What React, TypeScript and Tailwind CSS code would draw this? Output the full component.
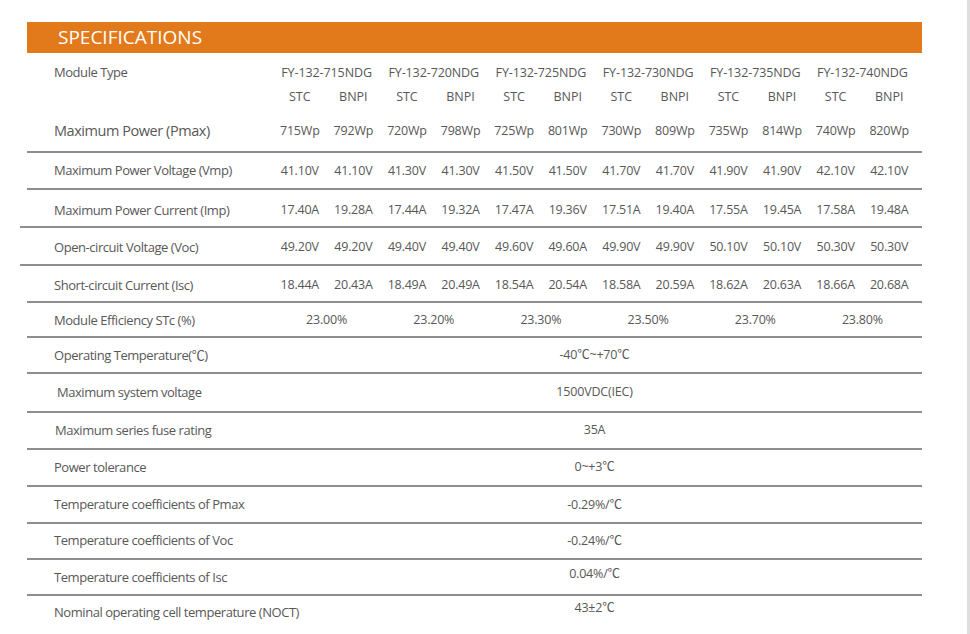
import React from "react"

const font = { fontFamily: '"Open Sans", "Noto Sans CJK SC", sans-serif' }

const models = ["715", "720", "725", "730", "735", "740"]

const pairRows = [
  {
    label: "Maximum Power Voltage (Vmp)",
    values: ["41.10V", "41.10V", "41.30V", "41.30V", "41.50V", "41.50V", "41.70V", "41.70V", "41.90V", "41.90V", "42.10V", "42.10V"],
    row: "h-[37px] pt-[1px]",
    wide: false,
  },
  {
    label: "Maximum Power Current (Imp)",
    values: ["17.40A", "19.28A", "17.44A", "19.32A", "17.47A", "19.36V", "17.51A", "19.40A", "17.55A", "19.45A", "17.58A", "19.48A"],
    row: "h-[38px] pt-[5px]",
    wide: true,
  },
  {
    label: "Open-circuit Voltage (Voc)",
    values: ["49.20V", "49.20V", "49.40V", "49.40V", "49.60V", "49.60A", "49.90V", "49.90V", "50.10V", "50.10V", "50.30V", "50.30V"],
    row: "h-[38px] pt-[3px]",
    wide: true,
  },
  {
    label: "Short-circuit Current (Isc)",
    values: ["18.44A", "20.43A", "18.49A", "20.49A", "18.54A", "20.54A", "18.58A", "20.59A", "18.62A", "20.63A", "18.66A", "20.68A"],
    row: "h-[37px] pt-[4px]",
    wide: false,
  },
]

const efficiency = ["23.00%", "23.20%", "23.30%", "23.50%", "23.70%", "23.80%"]

const singleRows = [
  { label: "Operating Temperature(℃)", value: "-40℃~+70℃", row: "h-[36px] pt-[1px]", indent: "pl-[27px]", valueCls: "", last: false },
  { label: "Maximum system voltage", value: "1500VDC(IEC)", row: "h-[39px]", indent: "pl-[30px]", valueCls: "", last: false },
  { label: "Maximum series fuse rating", value: "35A", row: "h-[37px]", indent: "pl-[28px]", valueCls: "", last: false },
  { label: "Power tolerance", value: "0~+3℃", row: "h-[37px]", indent: "pl-[27px]", valueCls: "", last: false },
  { label: "Temperature coefficients of Pmax", value: "-0.29%/℃", row: "h-[37px] pt-[1px]", indent: "pl-[27px]", valueCls: "", last: false },
  { label: "Temperature coefficients of Voc", value: "-0.24%/℃", row: "h-[36px]", indent: "pl-[27px]", valueCls: "", last: false },
  { label: "Temperature coefficients of Isc", value: "0.04%/℃", row: "h-[36px] pt-[2px]", indent: "pl-[27px]", valueCls: "pb-[7px]", last: false },
  { label: "Nominal operating cell temperature (NOCT)", value: "43±2℃", row: "h-[39px]", indent: "pl-[27px] pb-[5px]", valueCls: "pb-[14px]", last: true },
]

export default function App() {
  return (
    <div className="flex h-[634px] w-[970px] overflow-hidden bg-white text-[#585858]" style={font}>
      <div className="flex-1 pl-[27px] pt-[22px]">
        <div className="w-[895px]">
          {/* Title bar */}
          <div className="flex h-[31px] items-center bg-[#e2791b] pl-[31px] text-[19px] text-white">
            SPECIFICATIONS
          </div>

          {/* Module type */}
          <div className="mt-[8px] flex h-[24px] items-center text-[12.5px] tracking-[-0.1px]">
            <div className="w-[246px] pl-[27px] text-[13px] tracking-[-0.45px]">Module Type</div>
            <div className="grid w-[643px] grid-cols-6">
              {models.map((m) => (
                <div key={m} className="text-center">
                  FY-132-{m}NDG
                </div>
              ))}
            </div>
          </div>
          <div className="flex h-[24px] items-center text-[12.5px]">
            <div className="w-[246px]" />
            <div className="grid w-[643px] grid-cols-12">
              {models.map((m) => (
                <React.Fragment key={m}>
                  <div className="text-center">STC</div>
                  <div className="text-center">BNPI</div>
                </React.Fragment>
              ))}
            </div>
          </div>

          {/* Pmax */}
          <div className="flex h-[44px] items-center border-b-2 border-[#8e8e8e] pt-[2px] text-[12.5px] tracking-[-0.2px]">
            <div className="w-[246px] whitespace-nowrap pl-[27px] text-[14.5px] tracking-[-0.45px]">Maximum Power (Pmax)</div>
            <div className="grid w-[643px] grid-cols-12">
              {["715Wp", "792Wp", "720Wp", "798Wp", "725Wp", "801Wp", "730Wp", "809Wp", "735Wp", "814Wp", "740Wp", "820Wp"].map((v, i) => (
                <div key={i} className="text-center">
                  {v}
                </div>
              ))}
            </div>
          </div>

          {/* Paired values */}
          {pairRows.map((r) => (
            <div
              key={r.label}
              className={`flex items-center border-b-2 border-[#8e8e8e] text-[12.5px] tracking-[-0.2px] ${r.row} ${r.wide ? "-ml-[7px] pl-[7px]" : ""}`}
            >
              <div className="w-[246px] whitespace-nowrap pl-[27px] text-[13px] tracking-[-0.45px]">{r.label}</div>
              <div className="grid w-[643px] grid-cols-12">
                {r.values.map((v, i) => (
                  <div key={i} className="text-center">
                    {v}
                  </div>
                ))}
              </div>
            </div>
          ))}

          {/* Efficiency */}
          <div className="flex h-[35px] items-center border-b-2 border-[#8e8e8e] pt-[2px] text-[12.5px] tracking-[-0.2px]">
            <div className="w-[246px] whitespace-nowrap pl-[27px] text-[13px] tracking-[-0.45px]">Module Efficiency STc (%)</div>
            <div className="grid w-[643px] grid-cols-6">
              {efficiency.map((v) => (
                <div key={v} className="text-center">
                  {v}
                </div>
              ))}
            </div>
          </div>

          {/* Single values */}
          {singleRows.map((r) => (
            <div
              key={r.label}
              className={`flex items-center text-[12.5px] tracking-[-0.2px] ${r.row} ${r.last ? "" : "border-b-2 border-[#8e8e8e]"}`}
            >
              <div className={`w-[246px] whitespace-nowrap text-[13px] tracking-[-0.45px] ${r.indent}`}>{r.label}</div>
              <div className={`w-[643px] text-center ${r.valueCls}`}>{r.value}</div>
            </div>
          ))}
        </div>
      </div>
      <div className="w-[3px] bg-[#dedede]" />
    </div>
  )
}
